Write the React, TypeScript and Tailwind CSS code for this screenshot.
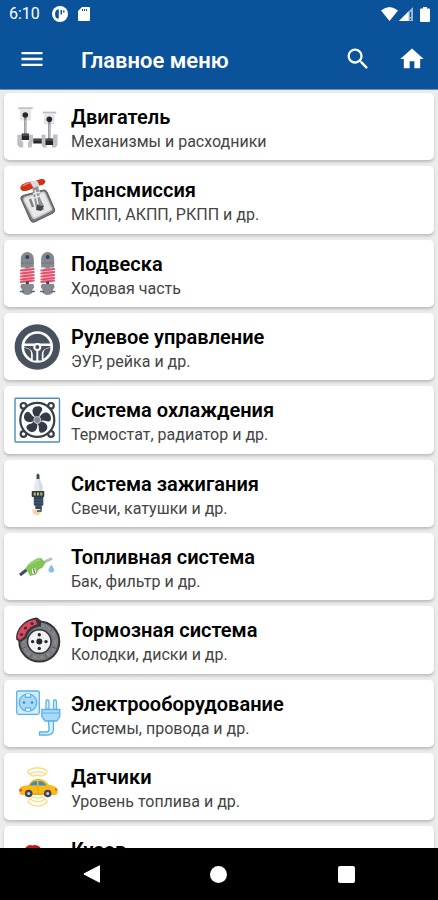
import { ReactNode } from "react";
import { MdHome, MdMenu, MdSearch } from "react-icons/md";

type MenuItem = {
    title: string;
    subtitle?: string;
    icon: ReactNode;
};

const EngineIcon = () => (
    <svg viewBox="0 0 48 48" className="size-12">
        <g fill="#e2e3e5">
            <rect x="7" y="7" width="11" height="10.5" />
            <rect x="31" y="11.5" width="10.5" height="10" />
        </g>
        <g fill="#bfc0c3">
            <rect x="5.3" y="4.3" width="14.4" height="2" />
            <rect x="29.7" y="8.6" width="13.6" height="2" />
            <path d="M4.3 32l4.4-.5v7h1.5v6H6.3l-2-3zM16 31.5l4 .5v6l-1.5 6.5H15V38.5h1zM28.5 32l4-.5v6.5h1v6.500h-3.500l-1.500-3zM40 31.5h4.500v10l-1.500 3h-4V38h1z" />
        </g>
        <path d="M12.3 12v20M36.3 16v21" stroke="#8b8d91" strokeWidth="2.4" />
        <path d="M12.3 17v14M36.3 21v14" stroke="#d5d6d8" strokeWidth=".8" />
        <g fill="#25272b">
            <circle cx="12.3" cy="12" r="2.8" />
            <circle cx="36.3" cy="16.3" r="2.8" />
            <rect x="8.700" y="30.500" width="7.3" height="6.500" />
            <rect x="20.300" y="35.500" width="8.4" height="5" />
            <rect x="32.500" y="35.500" width="7.500" height="6.500" />
        </g>
        <path d="M8.700 32h7.300M20.300 37h8.400M32.500 37h7.500" stroke="#6b6d72" strokeWidth="1" />
    </svg>
);

const GearboxIcon = () => (
    <svg viewBox="0 0 48 48" className="size-12">
        <path d="M10 19.5l20.500-5.500q2.500-.5 3.500 2l7.500 17q1 2.500-1.500 4l-18.500 9q-2.500 1-4-1.500L8 23q-1-2.500 2-3.500z" fill="#77797c" stroke="#55575a" strokeWidth="1" />
        <path d="M12 21.5l17.500-5q1.500-.4 2.300 1l6.500 14.500q.7 1.700-1 2.600l-15 7.400q-1.700.6-2.600-1l-8.500-16.500q-.7-2 .8-3z" fill="#e8e9ea" stroke="#cfd0d2" strokeWidth="1.6" />
        <path d="M17 23l3 8M24 21.500l6 12.500" stroke="#7d8085" strokeWidth="2.4" fill="none" />
        <path d="M19 10l6-2 2 14 4 8-3 4-5-2-2-10z" fill="#8f9296" />
        <path d="M22 14l3 14M20 18l7-2M21 22l6-2" stroke="#e6e7e8" strokeWidth="1.5" />
        <path d="M24 29l7 1-3 5-5-1z" fill="#43464a" />
        <path d="M8 10c1.500-3 8-4 12-4.500S28 2 31 3.500s.5 5-2 5.500-6 1-8 2.500-7 4-10.500 3.500S7 12 8 10z" fill="#cf3418" />
        <path d="M17 5.800l7-1.300 2.500 5-6 2.500z" fill="#d9dadc" />
        <path d="M10 10c2-2 5-2.500 7-3" stroke="#ef8a70" strokeWidth="1.2" fill="none" />
    </svg>
);

const Shock = () => (
    <>
        <path d="M-6.500 18.500V9.500a6.500 6.500 0 0 1 13 0v9H2.500v1.500h-5v-1.500z" fill="#85888c" />
        <path d="M-6.500 14h13" stroke="#73767a" strokeWidth="1" />
        <circle cx="0" cy="8" r="2" fill="#34406a" />
        <rect x="-5" y="19.5" width="10" height="14" fill="#f5b3be" />
        <path d="M-6.500 21.500l13-1.500M-6.500 24.500l13-1.500M-6.500 27.500l13-1.500M-6.500 30.500l13-1.500M-6.500 33l13-1.500" stroke="#e5506b" strokeWidth="1.8" strokeLinecap="round" />
        <rect x="-1.5" y="32.5" width="3" height="3" fill="#34406a" />
        <path d="M-6 35h12l1 3-2 3v3q-5 4-10 0v-3l-2-3z" fill="#85888c" />
        <path d="M-7.500 42.500h4M3.500 42.500h4" stroke="#59618a" strokeWidth="1.5" />
    </>
);

const SuspensionIcon = () => (
    <svg viewBox="0 0 48 48" className="size-12">
        <g transform="translate(14.3 0)"><Shock /></g>
        <g transform="translate(34.7 0)"><Shock /></g>
    </svg>
);

const SteeringIcon = () => (
    <svg viewBox="0 0 48 48" className="size-12">
        <circle cx="24.3" cy="24" r="22.7" fill="#48525f" />
        <circle cx="24.3" cy="24" r="14.5" fill="#48525f" stroke="#fff" strokeWidth="2.6" />
        <path d="M10.500 20.500h27.600v4.500c-5.500 0-7.600 2-7.600 6v7H18.100v-7c0-4-2.100-6-7.600-6z" fill="#fff" />
        <path d="M11.300 23h26v1.500c-5.500.5-8.500 3-8.500 7.500v5.500h-9V32c0-4.500-3-7-8.500-7.500z" fill="#48525f" />
        <path d="M24.300 27v11" stroke="#fff" strokeWidth="2" />
        <circle cx="24.3" cy="24" r="4" fill="#fff" />
        <circle cx="24.3" cy="24" r="2" fill="#48525f" />
    </svg>
);

const FanIcon = () => (
    <svg viewBox="0 0 48 48" className="size-12">
        <rect x="2" y="2.3" width="44.5" height="43.7" rx="1" fill="#fff" stroke="#4d8fbd" strokeWidth="1.4" />
        <g fill="#fff" stroke="#39404c" strokeWidth="2.2">
            <circle cx="10.5" cy="9.8" r="2.8" />
            <circle cx="38" cy="9.8" r="2.8" />
            <circle cx="10.5" cy="38" r="2.8" />
            <circle cx="38" cy="38" r="2.8" />
            <circle cx="24.3" cy="23.9" r="17" />
        </g>
        <g fill="#343b47">
            <path id="blade" d="M23 21.500c-4-3-5-8.500-1-10.700 4-1.500 7.800 0 7.200 3-.6 2.500-3 3.500-2.800 7z" />
            <use href="#blade" transform="rotate(72 24.3 24)" />
            <use href="#blade" transform="rotate(144 24.3 24)" />
            <use href="#blade" transform="rotate(216 24.3 24)" />
            <use href="#blade" transform="rotate(288 24.3 24)" />
        </g>
        <circle cx="24.3" cy="24" r="3.5" fill="#858b94" stroke="#c4c7cc" />
    </svg>
);

const SparkPlugIcon = () => (
    <svg viewBox="0 0 48 48" className="size-12">
        <path d="M23.500 6l1.500-1.800L26.500 6v5h-3z" fill="#3c4b60" />
        <path d="M23 10h4l1 4 1.500 2v6.500h-8.500V16l1.200-2z" fill="#e4ebf0" />
        <path d="M25.500 10H27l1 4 1.500 2v6.500h-3z" fill="#d2dce3" />
        <rect x="18.7" y="22" width="12.6" height="6" rx=".8" fill="#2c3b50" />
        <path d="M20.800 23.500h2v3h-2zM24 23.500h2v3h-2zM27.300 23.500h2v3h-2z" fill="#c9b65c" />
        <path d="M20.800 28h9.500v8.500h-1.500V40h-6.500v-3.500h-1.500z" fill="#33445a" />
        <path d="M21 31h9M21 34h9M23 37h6" stroke="#52647a" strokeWidth=".8" />
        <path d="M19.500 40c2 1 3 .5 5.500.5h3c.5 3-1 5.500-4 5.500-3.500 0-5-3-4.500-6z" fill="#fbd3a0" />
        <path d="M28 39v3h-4" stroke="#33445a" strokeWidth="1.3" fill="none" />
    </svg>
);

const FuelIcon = () => (
    <svg viewBox="0 0 48 48" className="size-12">
        <path d="M7 32l7-5.500" stroke="#3d4a63" strokeWidth="3" />
        <path d="M29 20l9-4" stroke="#b6bcca" strokeWidth="3" strokeLinecap="round" />
        <path d="M12 26l4-5.500c4-3.500 8-5.500 12-5.500l4.500 5-3 4.500-3.500 2-3 5-6 1.500-2.500-5z" fill="#82c455" />
        <path d="M15 22.500c4-3.500 7-5 12-5.500" stroke="#a0d77a" strokeWidth="1.5" fill="none" />
        <path d="M19 26l3-1 1 3.500-2 2.500-2-1z" fill="#fff" />
        <path d="M20.500 25.500l1 4.500" stroke="#56657f" strokeWidth="1.2" />
        <path d="M38.300 21.500c1 2 2.800 3.300 2.800 5.300a2.800 2.800 0 0 1-5.600 0c0-2 1.800-3.300 2.800-5.300z" fill="#86bfec" />
    </svg>
);

const BrakeIcon = () => (
    <svg viewBox="0 0 48 48" className="size-12">
        <circle cx="26.3" cy="25.6" r="20" fill="#7c7d80" stroke="#34363b" strokeWidth="2" />
        <circle cx="26.3" cy="25.6" r="16" fill="none" stroke="#8b8c90" strokeWidth="2" strokeDasharray="3 4" />
        <path d="M37 15l5-4M39 31l6 2M32 38l3 6M19 38l-3 6M13 31l-5 2" stroke="#58595d" strokeWidth="1" />
        <circle cx="26.3" cy="25.6" r="11.8" fill="#f0f1f5" stroke="#34363b" strokeWidth="1.6" />
        <circle cx="26.3" cy="25.6" r="3" fill="#24262c" />
        <g fill="#24262c">
            <circle cx="26.3" cy="18.8" r="1.7" />
            <circle cx="33" cy="25.6" r="1.7" />
            <circle cx="26.3" cy="32.4" r="1.7" />
            <circle cx="19.6" cy="25.6" r="1.7" />
        </g>
        <path d="M3.500 24c-2-9 7-21.500 20.500-22.500l4 3v6c-7 0-13 5-14.500 11.500L8 26z" fill="#34363b" />
        <path d="M4.500 22c-.5-8 7-17.500 18-18.500l1.800 5c-6 1-11.300 5.500-12.800 12l-4.500 3.500z" fill="#e0475b" />
        <g fill="#34363b">
            <circle cx="8.5" cy="18.5" r="1.6" />
            <circle cx="12.5" cy="12" r="1.6" />
            <circle cx="19" cy="7.5" r="1.6" />
        </g>
    </svg>
);

const ElectricIcon = () => (
    <svg viewBox="0 0 48 48" className="size-12">
        <g fill="#d4edfc" stroke="#5ab3ea" strokeWidth="1.3">
            <rect x="3.7" y="2" width="22.6" height="23.3" rx="1.5" />
            <circle cx="15" cy="13.6" r="8.8" fill="#a9d9f7" />
            <path d="M12.500 5.200v3.200h5V5.200M12.500 22v-3.200h5V22" fill="#e8f6fe" />
            <path d="M33 20.500v-8a1.500 1.500 0 0 1 3 0v8zM40.500 20.500v-8a1.500 1.500 0 0 1 3 0v8z" />
            <path d="M28.800 20.500h18v7l-3 4.500H32l-3.200-4.500z" fill="#a9d9f7" />
            <path d="M35.500 32h5v8c0 4-2 6-6 6h-8v-3h7c2 0 2.500-1 2.500-3z" />
        </g>
        <path d="M28.800 24h18" stroke="#5ab3ea" strokeWidth="1" />
        <circle cx="11" cy="13.6" r="1.3" fill="#398fc9" />
        <circle cx="19" cy="13.6" r="1.3" fill="#398fc9" />
    </svg>
);

const SensorIcon = () => (
    <svg viewBox="0 0 48 48" className="size-12">
        <g fill="none" stroke="#f8dc80" strokeWidth="1.3" strokeLinecap="round">
            <path d="M15 8.500c6-3.500 13-3.500 19 0M17.500 11.500c5-2.500 9.500-2.500 14 0M20.500 14.200c2.800-1.300 5.500-1.300 8 0M15 8.500c0 3 3 5 5.500 5.700M34 8.500c0 3-3 5-5.500 5.700" />
            <path d="M15 40.500c6 4.500 13 4.500 19 0M17.500 37.500c5 3 9.500 3 14 0M20.500 35c2.800 1.500 5.500 1.500 8 0M15 40.500c0-3 3-4.500 5.500-5.500M34 40.500c0-3-3-4.500-5.500-5.500" />
        </g>
        <path d="M6.500 31v-4c1-3 5-3.500 9-4 2.500-4 5-6 9.500-6 5 0 8 2 11 6 4.500.5 8 2 8.500 5v3.500q-1 1.500-3 1.500H9q-2.500 0-2.500-2z" fill="#fbb918" />
        <path d="M17 23c1.500-2.500 3.500-4 7-4v4.500h-7zM25.500 19c4 0 6 1.500 8 4.500h-8z" fill="#3a8fc0" />
        <path d="M25 24v8M19 32h12" stroke="#d99b12" strokeWidth=".8" />
        <path d="M6.300 27q2-.5 3 0l-.5 2.500H6.300zM42.500 26q2 .5 2 2.500h-2.500z" fill="#e8532f" />
        <g fill="#c9cad0" stroke="#424551" strokeWidth="2.2">
            <circle cx="15.7" cy="31.5" r="2.7" />
            <circle cx="34.7" cy="31.5" r="2.7" />
        </g>
    </svg>
);

const BodyIcon = () => (
    <svg viewBox="0 0 48 48" className="size-12">
        <path d="M13 11q3-3 6.500-1.500Q23 8 27 11l4 9H9z" fill="#c4161c" />
    </svg>
);

const items: MenuItem[] = [
    { title: "Двигатель", subtitle: "Механизмы и расходники", icon: <EngineIcon /> },
    { title: "Трансмиссия", subtitle: "МКПП, АКПП, РКПП и др.", icon: <GearboxIcon /> },
    { title: "Подвеска", subtitle: "Ходовая часть", icon: <SuspensionIcon /> },
    { title: "Рулевое управление", subtitle: "ЭУР, рейка и др.", icon: <SteeringIcon /> },
    { title: "Система охлаждения", subtitle: "Термостат, радиатор и др.", icon: <FanIcon /> },
    { title: "Система зажигания", subtitle: "Свечи, катушки и др.", icon: <SparkPlugIcon /> },
    { title: "Топливная система", subtitle: "Бак, фильтр и др.", icon: <FuelIcon /> },
    { title: "Тормозная система", subtitle: "Колодки, диски и др.", icon: <BrakeIcon /> },
    { title: "Электрооборудование", subtitle: "Системы, провода и др.", icon: <ElectricIcon /> },
    { title: "Датчики", subtitle: "Уровень топлива и др.", icon: <SensorIcon /> },
    { title: "Кузов", icon: <BodyIcon /> },
];

const StatusBar = () => (
    <div className="flex h-7 items-center pl-[9px] pr-2 text-white">
        <span className="text-base leading-7">6:10</span>
        <svg viewBox="0 0 16 16" className="ml-3 size-4">
            <circle cx="8" cy="8" r="8" fill="#fff" />
            <path d="M5 3.500q-2 1.500-2 4.500t2 4.500h1.800V3.500zM8.500 4H10v4.500H8.500zM11 4.500h1.500v2H11z" fill="#0a5299" />
        </svg>
        <svg viewBox="0 0 12 14" className="ml-[10px] h-[14px] w-3">
            <path d="M4 0h7q1 0 1 1v12q0 1-1 1H1q-1 0-1-1V4z" fill="#fff" />
            <path d="M4.500 2v2M6.500 2v2M8.500 2v2" stroke="#0a5299" strokeWidth="1" />
        </svg>
        <svg viewBox="0 0 17 14" className="ml-auto h-[14px] w-[17px]">
            <path d="M0 3.500Q8.500-3.500 17 3.500L8.500 14z" fill="#fff" />
        </svg>
        <svg viewBox="0 0 14 14" className="ml-px size-[14px]">
            <path d="M14 0v14H0z" fill="#fff" fillOpacity=".6" />
            <path d="M9.500 4.500V14H0z" fill="#fff" />
            <path d="M11.500 5v5M11.500 11.500v1.500" stroke="#0a5299" strokeWidth="1.2" />
        </svg>
        <svg viewBox="0 0 10 15" className="ml-[7px] h-[15px] w-[10px]">
            <path d="M3 0h4v1.500h2q1 0 1 1V14q0 1-1 1H1q-1 0-1-1V2.500q0-1 1-1h2z" fill="#fff" />
        </svg>
    </div>
);

const MenuCard = ({ title, subtitle, icon }: MenuItem) => (
    <a
        href="#"
        className="flex items-center gap-[10px] rounded-[5px] bg-white pl-[9px] pr-3 shadow-[0_2px_3px_rgba(0,0,0,0.2)]"
    >
        {icon}
        <div className="flex min-w-0 flex-1 flex-col self-stretch pb-1 pt-[11px]">
            <span className="text-xl leading-[26px] font-semibold text-black">{title}</span>
            {subtitle && <span className="text-base leading-6 text-[#444]">{subtitle}</span>}
        </div>
    </a>
);

const App = () => {
    return (
        <div className="flex h-screen flex-col bg-[#ececec] font-[Roboto,'Noto_Sans',sans-serif]">
            <header className="shrink-0 border-b border-[#6d8fc0] bg-[#0a5299]">
                <StatusBar />
                <div className="flex h-[61px] items-center pl-[18px] pr-3 text-white">
                    <button type="button" aria-label="Меню">
                        <MdMenu className="size-7" />
                    </button>
                    <h1 className="ml-[35px] flex-1 pt-1 text-[22px] leading-7 font-semibold">Главное меню</h1>
                    <button type="button" aria-label="Поиск">
                        <MdSearch className="size-7" />
                    </button>
                    <button type="button" aria-label="Домой" className="ml-[26px]">
                        <MdHome className="size-7" />
                    </button>
                </div>
            </header>

            <main className="min-h-0 flex-1 overflow-hidden">
                <div className="grid min-h-[106%] auto-rows-fr gap-[6px] px-1 pt-[3px]">
                    {items.map((item) => (
                        <MenuCard key={item.title} {...item} />
                    ))}
                </div>
            </main>

            <nav className="grid h-[52px] shrink-0 grid-cols-3 bg-black px-7">
                <button type="button" aria-label="Назад" className="flex items-center justify-center">
                    <svg viewBox="0 0 18 18" className="size-[18px]">
                        <path d="M16.500.8v16.400L.8 9z" fill="#fff" stroke="#fff" strokeLinejoin="round" />
                    </svg>
                </button>
                <button type="button" aria-label="Главный экран" className="flex items-center justify-center">
                    <span className="size-[17px] rounded-full bg-white" />
                </button>
                <button type="button" aria-label="Недавние" className="flex items-center justify-center">
                    <span className="size-[17px] rounded-[2px] bg-white" />
                </button>
            </nav>
        </div>
    );
};

export default App;
